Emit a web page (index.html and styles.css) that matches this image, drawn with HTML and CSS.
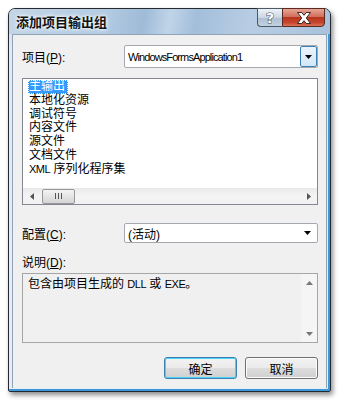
FILE: index.html
```html
<!DOCTYPE html>
<html lang="zh-CN">
<head>
<meta charset="UTF-8">
<title>添加项目输出组</title>
<link rel="stylesheet" href="styles.css">
</head>
<body>
<div class="window">
  <div class="titlebar">
    <span class="title">添加项目输出组</span>
    <div class="caption-buttons">
      <span class="cap-btn help">?</span>
      <span class="cap-btn close">
        <svg width="16" height="12" viewBox="0 0 16 12"><path d="M1.5 0.5h4.2L8 3.3l2.3-2.8h4.2L10.3 6l4.2 5.5h-4.2L8 8.7l-2.3 2.8H1.5L5.7 6z" fill="#fff" stroke="#3a2626" stroke-width="1"/></svg>
      </span>
    </div>
  </div>
  <div class="client">
    <div class="field-row">
      <label>项目(<u>P</u>):</label>
      <div class="combo editable">
        <span class="latin">WindowsFormsApplication1</span>
        <span class="drop-btn"><svg width="8" height="4" viewBox="0 0 8 4"><path d="M0 0h7L3.5 4z" fill="#000"/></svg></span>
      </div>
    </div>
    <div class="listbox">
      <ul class="items">
        <li><span class="selected">主输出</span></li>
        <li><span>本地化资源</span></li>
        <li><span>调试符号</span></li>
        <li><span>内容文件</span></li>
        <li><span>源文件</span></li>
        <li><span>文档文件</span></li>
        <li><span><b class="latin">XML</b> 序列化程序集</span></li>
      </ul>
      <div class="hscroll">
        <span class="arrow"><svg width="4" height="7" viewBox="0 0 4 7"><path d="M4 0v7L0 3.5z" fill="#555"/></svg></span>
        <span class="thumb"><i></i><i></i><i></i></span>
        <span class="track"></span>
        <span class="arrow"><svg width="4" height="7" viewBox="0 0 4 7"><path d="M0 0v7L4 3.5z" fill="#555"/></svg></span>
      </div>
    </div>
    <div class="field-row config">
      <label>配置(<u>C</u>):</label>
      <div class="combo">
        <span>(活动)</span>
        <span class="drop-arrow"><svg width="8" height="4" viewBox="0 0 8 4"><path d="M0 0h7L3.5 4z" fill="#000"/></svg></span>
      </div>
    </div>
    <div class="desc-label">说明(<u>D</u>):</div>
    <div class="desc-box">
      <p>包含由项目生成的 <b class="latin">DLL</b> 或 <b class="latin">EXE</b>。</p>
      <div class="vscroll">
        <span class="arrow"><svg width="7" height="4" viewBox="0 0 7 4"><path d="M0 4h7L3.5 0z" fill="#777"/></svg></span>
        <span class="arrow"><svg width="7" height="4" viewBox="0 0 7 4"><path d="M0 0h7L3.5 4z" fill="#777"/></svg></span>
      </div>
    </div>
    <div class="actions">
      <button class="default">确定</button>
      <button>取消</button>
    </div>
  </div>
</div>
</body>
</html>
```
FILE: styles.css
```css
body {
  margin: 0;
  padding: 8px;
  background: #fff;
  font-family: "Liberation Sans", "Noto Sans CJK SC", sans-serif;
  font-size: 12px;
  color: #000;
}

.latin {
  font-weight: normal;
  font-size: 11px;
  letter-spacing: -0.5px;
}

.combo .latin {
  letter-spacing: -0.9px;
}

.window {
  box-sizing: border-box;
  width: 323px;
  height: 384px;
  border: 1px solid #262a30;
  border-radius: 7px 7px 2px 2px;
  background: linear-gradient(#c9d9e9, #e2eaf2 40px, #e6edf4);
  box-shadow: inset -2px -2px 0 #3a9ad9, 2px 3px 5px rgba(0, 0, 0, 0.45);
  display: flex;
  flex-direction: column;
}

.titlebar {
  height: 25px;
  display: flex;
  justify-content: space-between;
  border-radius: 6px 6px 0 0;
  background: linear-gradient(100deg, #c3d5e7 0%, #b3cbe2 30%, #9fbbd8 42%, #c0d4e8 50%, #a3bedb 58%, #b8cde3 75%, #a9c2dc 100%);
}

.title {
  padding-left: 7px;
  line-height: 25px;
  font-family: "Noto Sans CJK SC", sans-serif;
  font-size: 13px;
  font-weight: bold;
  color: #111;
  text-shadow: 0 0 5px #fff, 0 0 3px #fff;
}

.caption-buttons {
  display: flex;
  margin: -1px 5px 0 0;
  height: 19px;
}

.cap-btn {
  box-sizing: border-box;
  height: 19px;
  display: flex;
  align-items: center;
  justify-content: center;
  border: 1px solid #4b5866;
}

.help {
  width: 25px;
  border-radius: 0 0 0 4px;
  border-right: none;
  background: linear-gradient(#eef3f8, #c9d6e3 50%, #aebfd0 52%, #c3d2e1);
  font-family: "DejaVu Sans", sans-serif;
  font-weight: bold;
  font-size: 14px;
  color: #fff;
  -webkit-text-stroke: 1px #3a4a5a;
  paint-order: stroke fill;
}

.close {
  width: 43px;
  border-radius: 0 0 4px 0;
  border-color: #5a2a22;
  background: linear-gradient(#e9a594, #d0705c 45%, #b8351f 50%, #c7452c 80%, #d8745a);
}

.client {
  flex: 1;
  margin: 0 3px 3px 3px;
  border: 1px solid #8fa2b6;
  border-bottom: none;
  background: #f0f0f0;
  padding: 10px 8px 0 9px;
  display: flex;
  flex-direction: column;
}

.field-row {
  display: flex;
  align-items: center;
  height: 23px;
}

.field-row label {
  width: 102px;
}

.combo {
  box-sizing: border-box;
  flex: 1;
  height: 100%;
  display: flex;
  align-items: center;
  justify-content: space-between;
  background: #fff;
  border: 1px solid #a4a9b0;
  border-radius: 2px;
  padding-left: 3px;
}

.drop-btn {
  box-sizing: border-box;
  width: 17px;
  height: 21px;
  display: flex;
  align-items: center;
  justify-content: center;
  background: linear-gradient(#eaf4fc, #d3e6f6);
  border: 1px solid #3c7fb1;
  border-radius: 2px;
}

.drop-arrow {
  width: 17px;
  display: flex;
  justify-content: center;
  margin-right: 1px;
}

.listbox {
  box-sizing: border-box;
  margin-top: 10px;
  height: 127px;
  border: 1px solid #828790;
  background: #fff;
  display: flex;
  flex-direction: column;
}

.items {
  list-style: none;
  margin: 0;
  padding: 1px 0 0 5px;
  flex: 1;
}

.items li {
  height: 13.8px;
  line-height: 13.8px;
}

.items span {
  display: inline-block;
  padding: 0 3px 0 1px;
}

.items .selected {
  background: #3399ff;
  color: #fff;
  outline: 1px dotted #fff;
  outline-offset: -1px;
  padding: 0 3px 0 1px;
}

.hscroll {
  height: 16px;
  display: flex;
  align-items: center;
  background: linear-gradient(#e9e9e9, #f4f4f4 50%, #f1f1f1);
}

.hscroll .arrow {
  width: 17px;
  display: flex;
  justify-content: center;
}

.thumb {
  box-sizing: border-box;
  width: 33px;
  height: 15px;
  margin-left: 2px;
  border: 1px solid #979797;
  border-radius: 2px;
  background: linear-gradient(#f4f4f4, #e4e4e4 50%, #d4d4d4);
  display: flex;
  align-items: center;
  justify-content: center;
  gap: 2px;
}

.thumb i {
  width: 1px;
  height: 6px;
  background: #555;
}

.track {
  flex: 1;
}

.config {
  margin-top: 18px;
  height: 20px;
}

.desc-label {
  margin-top: 13px;
  line-height: 14px;
}

.desc-box {
  box-sizing: border-box;
  margin-top: 3px;
  height: 70px;
  border: 1px solid #a6a6a6;
  background: #f0f0f0;
  display: flex;
  justify-content: space-between;
}

.desc-box p {
  margin: 3px 0 0 5px;
  line-height: 14px;
}

.vscroll {
  width: 16px;
  display: flex;
  flex-direction: column;
  justify-content: space-between;
  background: #f5f5f5;
}

.vscroll .arrow {
  height: 17px;
  display: flex;
  align-items: center;
  justify-content: center;
}

.actions {
  margin-top: 14px;
  display: flex;
  justify-content: flex-end;
  gap: 8px;
}

button {
  box-sizing: border-box;
  width: 73px;
  height: 22px;
  padding: 0;
  font-family: "Liberation Sans", "Noto Sans CJK SC", sans-serif;
  font-size: 12px;
  color: #000;
  border: 1px solid #707070;
  border-radius: 3px;
  background: linear-gradient(#f2f2f2, #ebebeb 50%, #dddddd 51%, #cfcfcf);
  box-shadow: inset 0 0 0 1px #fcfcfc;
}

button.default {
  border-color: #3c7fb1;
  box-shadow: inset 0 0 0 1px #48d1fb;
}
```
